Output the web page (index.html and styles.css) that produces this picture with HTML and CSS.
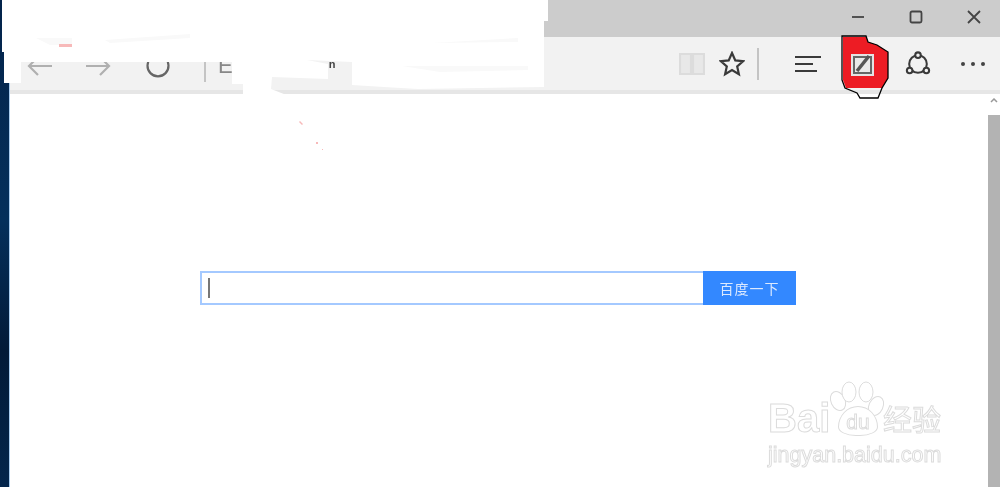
FILE: index.html
```html
<!DOCTYPE html>
<html lang="zh">
<head>
    <meta charset="UTF-8">
    <title>百度一下</title>
    <link rel="stylesheet" href="styles.css">
</head>
<body>
    <div class="desktop"></div>
    <div class="browser">
        <div class="titlebar">
            <svg class="win" viewBox="0 0 14 14"><path d="M1 7h12" /></svg>
            <svg class="win" viewBox="0 0 14 14"><rect x="1.5" y="1.5" width="11" height="11" rx="1.5" /></svg>
            <svg class="win" viewBox="0 0 14 14"><path d="M1 1l12 12M13 1L1 13" /></svg>
        </div>
        <div class="toolbar">
            <div class="nav">
                <button class="tool">
                    <svg class="light" viewBox="0 0 26 22"><path d="M25 11H2M11 2l-9 9 9 9" /></svg>
                </button>
                <button class="tool">
                    <svg class="light" viewBox="0 0 26 22"><path d="M1 11h23M15 2l9 9-9 9" /></svg>
                </button>
                <button class="tool tool-refresh">
                    <svg class="mid" viewBox="0 0 26 26"><path d="M6 5a10.500 10.500 0 1 0 14 0" /></svg>
                </button>
                <span class="sep"></span>
                <span class="site-icon">E</span>
            </div>
            <span class="addr">n</span>
            <div class="actions">
                <button class="tool tool-sm">
                    <svg class="book" viewBox="0 0 26 26"><path d="M1 3h11v20H1zM14 3h11v20H14z" /></svg>
                </button>
                <button class="tool tool-sm">
                    <svg class="dark" viewBox="0 0 26 26"><path d="M13 2l3.300 7.400 7.700.8-5.800 5.200 1.700 7.800-6.900-4.100-6.900 4.100 1.700-7.800L2 10.200l7.700-.8z" /></svg>
                </button>
                <span class="sep sep-r"></span>
                <button class="tool">
                    <svg class="dark" viewBox="0 0 26 20"><path d="M0 3h26M0 10h18M0 17h22" /></svg>
                </button>
                <button class="tool">
                    <svg class="dark" viewBox="0 0 26 26"><path d="M3 3h20v20H3zM8 18l1-4L18 5l3 3-9 9z" /></svg>
                </button>
                <button class="tool">
                    <svg class="dark" viewBox="0 0 28 28"><circle cx="14" cy="14" r="9.500" /><circle cx="14" cy="4.500" r="3" class="dot" /><circle cx="5" cy="21" r="3" class="dot" /><circle cx="23" cy="21" r="3" class="dot" /></svg>
                </button>
                <button class="tool">
                    <span class="more"><i></i><i></i><i></i></span>
                </button>
            </div>
        </div>
        <div class="toolbar-line"></div>
        <div class="page">
            <div class="content">
                <form class="search">
                    <div class="search-input"><span class="caret"></span></div>
                    <div class="search-btn">百度一下</div>
                </form>
            </div>
            <div class="scrollbar">
                <div class="scroll-up">
                    <svg viewBox="0 0 8 5"><path d="M1 4l3-3 3 3" /></svg>
                </div>
                <div class="scroll-thumb"></div>
            </div>
        </div>
    </div>

    <!-- 截图上的涂抹和红色标记 -->
    <svg class="marks" viewBox="0 0 1000 487">
        <path class="erase" d="M2 0H548V21H544V87L418 89 384 87 352 85V62L307 60 328 64V79L272 77 271 89 289 96V100H243V84H232V62H21V83H4V52H2Z" />
        <path class="smudge" d="M36 38H72V45H50ZM105 40L190 34V38L110 43ZM432 43L518 38V42ZM402 66H528V70L440 72Z" />
        <path class="pink" d="M59 44H72V47H59ZM300 121l3 3-1 1-3-3ZM316 142h2v2h-2ZM322 149h1v1h-1Z" />
        <path class="red-fill" d="M843 37H866L868 42 877 45 888 52V78L882 88H846L843 80Z" />
        <path class="red-line" d="M842 36H866L868 42 877 45 888 52V78L882 88 878 98H860L857 93 845 88 842 80Z" />
        <path class="note-halo" d="M851 54H874V76H851Z" />
        <path class="note-box" d="M854 57H871V73H854Z" />
        <path class="note-pen" d="M857 71L869 56" />
    </svg>

    <div class="watermark">
        <div class="wm-top">
            <span class="wm-bai">Bai</span>
            <span class="wm-du">
                <svg class="wm-paw" viewBox="0 0 54 32"><ellipse cx="6" cy="22" rx="7" ry="10" transform="rotate(-25 6 22)" /><ellipse cx="17" cy="13" rx="7" ry="10" /><ellipse cx="34" cy="13" rx="7" ry="10" /><ellipse cx="44" cy="27" rx="7" ry="10" transform="rotate(25 44 27)" /></svg>
                du
            </span>
            <span class="wm-cn">经验</span>
        </div>
        <div class="wm-url">jingyan.baidu.com</div>
    </div>
</body>
</html>
```

FILE: styles.css
```css
html, body {
    margin: 0;
    height: 100%;
}
body {
    width: 1000px;
    height: 487px;
    overflow: hidden;
    display: flex;
    position: relative;
    background: #fff;
    font-family: 'Liberation Sans', 'Noto Sans CJK SC', sans-serif;
}
.desktop {
    width: 9px;
    flex: none;
    background: linear-gradient(180deg, #03234a 0%, #04305c 45%, #021a38 72%, #04264c 100%);
    box-shadow: 1px 0 0 #a9cdf0;
    position: relative;
    z-index: 1;
}
.browser {
    flex: 1;
    display: flex;
    flex-direction: column;
    min-width: 0;
    filter: blur(0.7px);
}
.titlebar {
    height: 37px;
    box-sizing: border-box;
    flex: none;
    background: #cccccc;
    display: flex;
    justify-content: flex-end;
    align-items: center;
    gap: 44px;
    padding: 0 19px 4px 0;
}
.win {
    width: 14px;
    height: 14px;
    fill: none;
    stroke: #444;
    stroke-width: 1.8;
}
.toolbar {
    height: 53px;
    flex: none;
    background: #f2f2f2;
    display: flex;
    align-items: center;
}
.nav {
    display: flex;
    align-items: center;
    padding-left: 2px;
    padding-top: 4px;
}
.tool {
    width: 55px;
    height: 49px;
    flex: none;
    padding: 0;
    border: 0;
    background: none;
    display: flex;
    align-items: center;
    justify-content: center;
}
.nav .tool {
    width: 58px;
}
.nav .tool-refresh {
    padding-left: 3px;
}
.tool-sm {
    width: 40px;
}
.tool svg {
    width: 26px;
    height: 26px;
    fill: none;
    stroke-width: 2.2;
}
.light { stroke: #b0b0b0; }
.mid { stroke: #666; }
.dark { stroke: #3a3a3a; }
.book {
    stroke: #dcdcdc;
    fill: #e8e8e8 !important;
}
.dot {
    fill: #f2f2f2;
}
.sep {
    width: 2px;
    height: 32px;
    margin-left: 19px;
    background: #c4c4c4;
}
.sep-r {
    margin: 0 21px 0 5px;
}
.site-icon {
    margin-left: 12px;
    font-size: 22px;
    color: #888;
}
.addr {
    margin-left: 96px;
    font-size: 11px;
    font-weight: bold;
    color: #444;
}
.actions {
    margin-left: auto;
    display: flex;
    align-items: center;
}
.more {
    display: flex;
    gap: 6px;
}
.more i {
    width: 4px;
    height: 4px;
    border-radius: 50%;
    background: #444;
}
.toolbar-line {
    height: 4px;
    flex: none;
    background: #e6e6e6;
}
.page {
    flex: 1;
    display: flex;
    min-height: 0;
}
.content {
    flex: 1;
    padding-top: 177px;
    padding-left: 191px;
    background: #fff;
}
.search {
    width: 596px;
    height: 34px;
    display: flex;
}
.search-input {
    flex: 1;
    border: 2px solid #a4c9ff;
    border-right: 0;
    display: flex;
    align-items: center;
    padding-left: 6px;
    background: #fff;
}
.caret {
    width: 2px;
    height: 20px;
    background: #777;
}
.search-btn {
    width: 93px;
    background: #3388ff;
    color: #dbe9ff;
    font-size: 14px;
    letter-spacing: 1px;
    display: flex;
    align-items: center;
    justify-content: center;
}
.scrollbar {
    width: 12px;
    flex: none;
    display: flex;
    flex-direction: column;
}
.scroll-up {
    height: 21px;
    display: flex;
    justify-content: center;
    padding-top: 4px;
    box-sizing: border-box;
}
.scroll-up svg {
    width: 8px;
    height: 5px;
    fill: none;
    stroke: #999;
    stroke-width: 1.5;
}
.scroll-thumb {
    flex: 1;
    background: #b3b3b3;
}
.marks {
    position: absolute;
    left: 0;
    top: 0;
    width: 1000px;
    height: 487px;
    z-index: 2;
}
.erase { fill: #fff; }
.smudge { fill: #f9f9f9; }
.pink { fill: #f7b9b9; }
.red-fill { fill: #ed1c24; }
.red-line {
    fill: none;
    stroke: #000;
    stroke-width: 1.3;
}
.note-halo {
    fill: #e4e4e4;
    filter: blur(0.6px);
}
.note-box {
    fill: #e9e9e9;
    stroke: #666;
    stroke-width: 2;
    filter: blur(0.6px);
}
.note-pen {
    stroke: #555;
    stroke-width: 3.500;
    filter: blur(0.6px);
}
.watermark {
    position: absolute;
    left: 768px;
    top: 378px;
    z-index: 3;
    color: #fff;
    -webkit-text-stroke: 1px #dcdcdc;
    filter: blur(0.5px);
}
.wm-top {
    display: flex;
    align-items: flex-end;
    height: 58px;
}
.wm-bai {
    font-size: 40px;
    font-weight: bold;
    line-height: 36px;
    width: 68px;
}
.wm-du {
    width: 40px;
    height: 30px;
    margin: 0 5px 0 2px;
    border: 1px solid #dcdcdc;
    border-radius: 50% 50% 45% 45% / 70% 70% 30% 30%;
    background: #fff;
    font-size: 21px;
    line-height: 30px;
    text-align: center;
    position: relative;
    box-sizing: border-box;
}
.wm-paw {
    position: absolute;
    left: -7px;
    top: -28px;
    width: 54px;
    height: 32px;
    overflow: visible;
    z-index: -1;
    fill: #fff;
    stroke: #dcdcdc;
    stroke-width: 1;
}
.wm-cn {
    font-size: 29px;
    line-height: 30px;
}
.wm-url {
    font-size: 21.5px;
    line-height: 26px;
    margin-top: 6px;
    white-space: nowrap;
}
```
